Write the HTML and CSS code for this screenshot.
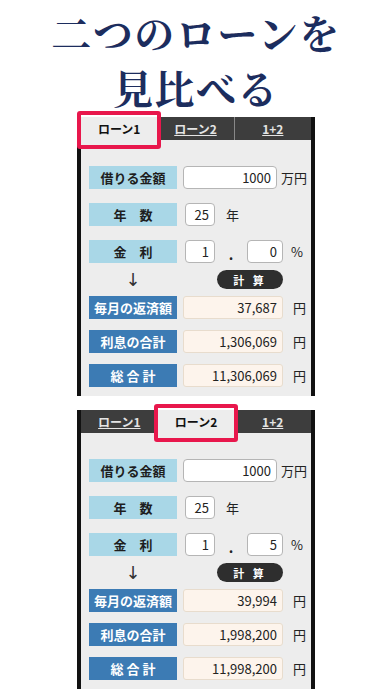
FILE: index.html
```html
<!DOCTYPE html>
<html lang="ja">
<head>
<meta charset="UTF-8" />
<meta name="viewport" content="width=device-width, initial-scale=1.0"/>
<title>ローン比較</title>
<link rel="stylesheet" href="styles.css">
</head>
<body>
  <div class="title">
    <p>二つのローンを</p>
    <p>見比べる</p>
  </div>

  <div class="panel">
    <div class="tabs">
      <div class="tab active"><span class="mark"></span>ローン1</div>
      <div class="tab"><span class="link">ローン2</span></div>
      <div class="tab sep"><span class="link">1+2</span></div>
    </div>
    <div class="body">
      <div class="inputs">
        <div class="row">
          <div class="label">借りる金額</div>
          <div class="field amount">1000</div>
          <span class="unit tight">万円</span>
        </div>
        <div class="row">
          <div class="label">年　数</div>
          <div class="field small">25</div>
          <span class="unit year">年</span>
        </div>
        <div class="row">
          <div class="label">金　利</div>
          <div class="field small">1</div>
          <span class="dot">.</span>
          <div class="field rate">0</div>
          <span class="unit pct">%</span>
        </div>
      </div>
      <div class="action">
        <span class="arrow">↓</span>
        <div class="btn-wrap"><button class="calc">計 算</button></div>
      </div>
      <div class="results">
        <div class="row">
          <div class="label dark">毎月の返済額</div>
          <div class="field value">37,687</div>
          <span class="unit yen">円</span>
        </div>
        <div class="row">
          <div class="label dark">利息の合計</div>
          <div class="field value">1,306,069</div>
          <span class="unit yen">円</span>
        </div>
        <div class="row">
          <div class="label dark">総 合 計</div>
          <div class="field value">11,306,069</div>
          <span class="unit yen">円</span>
        </div>
      </div>
    </div>
  </div>

  <div class="panel second">
    <div class="tabs">
      <div class="tab"><span class="link">ローン1</span></div>
      <div class="tab active"><span class="mark"></span>ローン2</div>
      <div class="tab"><span class="link">1+2</span></div>
    </div>
    <div class="body">
      <div class="inputs">
        <div class="row">
          <div class="label">借りる金額</div>
          <div class="field amount">1000</div>
          <span class="unit tight">万円</span>
        </div>
        <div class="row">
          <div class="label">年　数</div>
          <div class="field small">25</div>
          <span class="unit year">年</span>
        </div>
        <div class="row">
          <div class="label">金　利</div>
          <div class="field small">1</div>
          <span class="dot">.</span>
          <div class="field rate">5</div>
          <span class="unit pct">%</span>
        </div>
      </div>
      <div class="action">
        <span class="arrow">↓</span>
        <div class="btn-wrap"><button class="calc">計 算</button></div>
      </div>
      <div class="results">
        <div class="row">
          <div class="label dark">毎月の返済額</div>
          <div class="field value">39,994</div>
          <span class="unit yen">円</span>
        </div>
        <div class="row">
          <div class="label dark">利息の合計</div>
          <div class="field value">1,998,200</div>
          <span class="unit yen">円</span>
        </div>
        <div class="row">
          <div class="label dark">総 合 計</div>
          <div class="field value">11,998,200</div>
          <span class="unit yen">円</span>
        </div>
      </div>
    </div>
  </div>
</body>
</html>
```

FILE: styles.css
```css
:root {
  --navy: #1c2d5e;
  --frame: #111;
  --tabbar: #3d3d3d;
  --panel: #ededed;
  --light-label: #a9d7e7;
  --dark-label: #3c7bb4;
  --result-bg: #fdf4ec;
  --result-border: #e8dccd;
  --mark: #e8174c;
  --font: "Noto Sans CJK JP", "Noto Sans", sans-serif;
}

body {
  margin: 0;
  background: #fff;
  font-family: var(--font);
  color: #222;
}

.title {
  padding-top: 4px;
  text-align: center;
  font-family: "Noto Serif CJK JP", "Noto Sans CJK JP", serif;
  font-weight: 700;
  font-size: 40px;
  letter-spacing: 1.5px;
  color: var(--navy);
}

.title p {
  margin: 0;
  line-height: 55px;
}

.panel {
  width: 230px;
  margin: 3px auto 0;
  border-left: 4px solid var(--frame);
  border-right: 4px solid var(--frame);
  background: var(--panel);
}

.panel.second {
  margin-top: 14px;
}

.tabs {
  display: flex;
  height: 23px;
  background: var(--tabbar);
}

.tab {
  position: relative;
  flex: 1;
  display: flex;
  justify-content: center;
  align-items: center;
  font-size: 12px;
  font-weight: 700;
}

.tab.sep {
  border-left: 1px solid #888;
}

.tab.active {
  background: var(--panel);
  color: #111;
}

.link {
  color: #e4e4e4;
  text-decoration: underline;
}

.mark {
  position: absolute;
  top: -6px;
  left: -4px;
  right: -4px;
  bottom: -9px;
  border: 4px solid var(--mark);
  border-radius: 3px;
}

.body {
  padding: 26px 0 9px 8px;
}

.inputs {
  display: flex;
  flex-direction: column;
  gap: 14px;
}

.results {
  display: flex;
  flex-direction: column;
  gap: 11px;
}

.row {
  display: flex;
  align-items: center;
  height: 23px;
}

.label {
  width: 88px;
  height: 23px;
  line-height: 23px;
  text-align: center;
  background: var(--light-label);
  font-size: 13px;
  font-weight: 700;
  color: #1e1e1e;
}

.label.dark {
  background: var(--dark-label);
  color: #fff;
}

.field {
  box-sizing: border-box;
  height: 23px;
  line-height: 21px;
  margin-left: 6px;
  padding: 0 5px;
  text-align: right;
  font-size: 13px;
  background: #fff;
  border: 1px solid #b5b5b5;
  border-radius: 4px;
}

.field.amount { width: 94px; }
.field.small { width: 30px; margin-left: 8px; }
.field.rate { width: 36px; margin-left: 0; }

.field.value {
  width: 100px;
  background: var(--result-bg);
  border-color: var(--result-border);
  border-radius: 3px;
}

.unit {
  font-size: 13px;
}

.unit.tight { margin-left: 4px; }
.unit.year { margin-left: 11px; }
.unit.pct { margin-left: 8px; }
.unit.yen { margin-left: 10px; }

.dot {
  width: 32px;
  text-align: center;
  font-size: 14px;
  font-weight: 700;
  padding-top: 4px;
}

.action {
  display: flex;
  align-items: center;
  height: 19px;
  margin: 7px 0;
}

.arrow {
  width: 88px;
  text-align: center;
  font-family: "DejaVu Sans", sans-serif;
  font-size: 18px;
  line-height: 19px;
  color: #333;
}

.btn-wrap {
  width: 100px;
  margin-left: 6px;
  display: flex;
  justify-content: flex-end;
}

.calc {
  width: 66px;
  height: 19px;
  padding: 0;
  border: none;
  border-radius: 10px;
  background: #2e2e2e;
  color: #fff;
  font-family: var(--font);
  font-size: 11px;
  font-weight: 700;
  letter-spacing: 3px;
}
```
